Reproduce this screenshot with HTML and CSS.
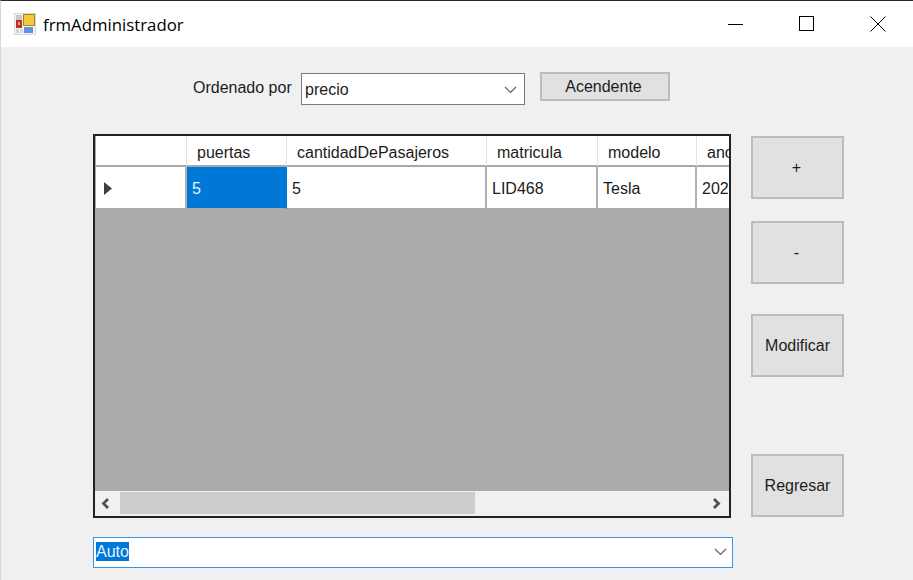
FILE: index.html
```html
<!DOCTYPE html>
<html lang="es">
<head>
  <meta charset="UTF-8" />
  <title>frmAdministrador</title>
  <link rel="stylesheet" href="styles.css">
</head>
<body>
  <div class="window">
    <!-- Title bar -->
    <div class="titlebar">
      <svg class="app-icon" width="22" height="22" viewBox="0 0 22 22">
        <rect width="22" height="22" fill="#d9d9d9"/>
        <rect x="1" y="1" width="20" height="20" fill="#f4f4f4"/>
        <rect x="2" y="2" width="6" height="5" fill="#c8c8c8"/>
        <rect x="2" y="7" width="6" height="8" fill="#b8322a"/>
        <rect x="4" y="9" width="2" height="3" fill="#e9a09a"/>
        <rect x="2" y="16" width="3" height="4" fill="#d0d0d0"/>
        <rect x="6" y="16" width="3" height="4" fill="#d8d8d8"/>
        <rect x="9" y="1" width="12" height="12" fill="#a8821c"/>
        <rect x="10" y="2" width="10" height="10" fill="#f6c83c"/>
        <rect x="10" y="14" width="9" height="6" fill="#5f94dc"/>
      </svg>
      <span class="title">frmAdministrador</span>
      <div class="win-buttons">
        <svg width="16" height="16" viewBox="0 0 16 16"><path d="M0 8.5h15" stroke="#000" fill="none"/></svg>
        <svg width="16" height="16" viewBox="0 0 16 16"><rect x="0.5" y="0.5" width="14" height="14" stroke="#000" fill="none"/></svg>
        <svg width="16" height="16" viewBox="0 0 16 16"><path d="M0.5 0.5l15 15M15.5 0.5l-15 15" stroke="#000" fill="none"/></svg>
      </div>
    </div>

    <div class="form">
      <div class="sort-row">
        <span class="sort-label">Ordenado por</span>
        <div class="combo combo-sort">
          <span class="combo-text">precio</span>
          <svg class="chevron" width="13" height="8" viewBox="0 0 13 8"><path d="M1 1l5.5 5.5L12 1" stroke="#606060" stroke-width="1.2" fill="none"/></svg>
        </div>
        <div class="btn btn-order">Acendente</div>
      </div>

      <div class="content">
        <div class="left-col">
          <div class="grid-view">
            <div class="grid-inner">
              <div class="rows">
                <div class="cell head first"></div>
                <div class="cell head">puertas</div>
                <div class="cell head">cantidadDePasajeros</div>
                <div class="cell head">matricula</div>
                <div class="cell head">modelo</div>
                <div class="cell head last">ano</div>

                <div class="cell data first">
                  <svg width="8" height="13" viewBox="0 0 8 13"><path d="M0 0l8 6.5L0 13z" fill="#404040"/></svg>
                </div>
                <div class="cell data selected">5</div>
                <div class="cell data">5</div>
                <div class="cell data">LID468</div>
                <div class="cell data">Tesla</div>
                <div class="cell data last">2020</div>
              </div>
            </div>
            <div class="scrollbar">
              <svg class="arrow arrow-left" width="9" height="11" viewBox="0 0 9 11"><path d="M7 1L2.5 5.5 7 10" stroke="#505050" stroke-width="2.8" fill="none"/></svg>
              <div class="track"><div class="thumb"></div></div>
              <svg class="arrow arrow-right" width="9" height="11" viewBox="0 0 9 11"><path d="M2 1l4.5 4.5L2 10" stroke="#505050" stroke-width="2.8" fill="none"/></svg>
            </div>
          </div>

          <div class="combo combo-auto">
            <span class="combo-text"><span class="highlight">Auto</span></span>
            <svg class="chevron" width="13" height="8" viewBox="0 0 13 8"><path d="M1 1l5.5 5.5L12 1" stroke="#606060" stroke-width="1.2" fill="none"/></svg>
          </div>
        </div>

        <div class="side-buttons">
          <div class="btn btn-side btn-plus">+</div>
          <div class="btn btn-side btn-minus">-</div>
          <div class="btn btn-side btn-mod">Modificar</div>
          <div class="btn btn-side btn-back">Regresar</div>
        </div>
      </div>
    </div>
  </div>
</body>
</html>
```

FILE: styles.css
```css
* {
  box-sizing: border-box;
}

html, body {
  margin: 0;
  padding: 0;
  overflow: hidden;
}

body {
  width: 913px;
  height: 580px;
  font-family: "Liberation Sans", Arial, sans-serif;
  font-size: 16px;
  color: #1c1c1c;
  background-color: #f0f0f0;
}

.window {
  height: 580px;
  border-top: 1px solid #2a2a2a;
  border-left: 1px solid #d8d8d8;
}

.titlebar {
  display: flex;
  align-items: center;
  height: 46px;
  padding-left: 13px;
  background-color: #fff;
}

.app-icon {
  margin-right: 7px;
}

.title {
  font-family: "Open Sans", "Noto Sans", sans-serif;
  font-size: 16.8px;
  color: #000;
  flex-grow: 1;
}

.win-buttons {
  display: flex;
  gap: 55px;
  padding-right: 27px;
}

.sort-row {
  display: flex;
  align-items: flex-start;
  padding: 25px 0 0 192px;
  height: 87px;
}

.sort-label {
  margin-top: 7px;
  width: 108px;
}

.combo {
  display: flex;
  align-items: center;
  justify-content: space-between;
  background-color: #fff;
}

.combo-sort {
  width: 224px;
  height: 32px;
  margin-top: 1px;
  padding: 2px 7px 0 3px;
  border: 1.5px solid #7a7a7a;
}

.combo-auto {
  width: 640px;
  height: 31px;
  margin-top: 19px;
  padding: 0 5px 2px 2px;
  border: 1.5px solid #3a96e2;
}

.highlight {
  display: inline-block;
  height: 19px;
  line-height: 19px;
  background-color: #0078d7;
  color: #e8f2fb;
}

.btn {
  display: flex;
  align-items: center;
  justify-content: center;
  background-color: #e1e1e1;
  border: 2px solid #bcbcbc;
}

.btn-order {
  width: 130px;
  height: 29px;
  margin-left: 15px;
  padding-right: 3px;
  padding-top: 1px;
}

.content {
  display: flex;
  padding-left: 92px;
}

.grid-view {
  width: 638px;
  height: 384px;
  display: flex;
  flex-direction: column;
  border: 2px solid #222;
  background-color: #ababab;
}

.grid-inner {
  flex-grow: 1;
  overflow: hidden;
}

.rows {
  display: grid;
  grid-template-columns: 92px 100px 200px 111px 99px 32px;
  grid-template-rows: 31px 42px;
}

.cell {
  display: flex;
  align-items: center;
  padding-left: 5px;
  overflow: hidden;
  white-space: nowrap;
  background-color: #fff;
  border-right: 1px solid #a0a0a0;
  border-bottom: 1px solid #a0a0a0;
}

.cell.head {
  padding-left: 10px;
  padding-top: 4px;
  border-right-color: #e2e2e2;
  border-bottom-width: 2px;
  border-bottom-color: #a8a8a8;
}

.cell.data {
  padding-top: 2px;
  border-right-width: 2px;
  border-right-color: #b0b0b0;
  border-bottom-color: #a8a8a8;
}

.cell.first {
  padding-left: 8px;
  margin-left: 1px;
}

.cell.last {
  border-right: none;
}

.cell.selected {
  background-color: #0078d7;
  color: #e8f2fb;
  border-right-color: #0078d7;
}

.scrollbar {
  display: flex;
  align-items: center;
  height: 25px;
  background-color: #f0f0f0;
  padding: 1px 0 2px;
}

.arrow {
  flex-shrink: 0;
}

.arrow-left {
  margin: 0 10px 0 6px;
}

.arrow-right {
  margin: 0 8px 0 6px;
}

.track {
  flex-grow: 1;
  height: 100%;
}

.thumb {
  width: 355px;
  height: 100%;
  background-color: #cdcdcd;
}

.side-buttons {
  display: flex;
  flex-direction: column;
  width: 93px;
  margin-left: 18px;
  padding-top: 2px;
}

.btn-side {
  height: 63px;
}

.btn-plus,
.btn-minus {
  padding-right: 2px;
}

.btn-minus {
  margin-top: 22px;
}

.btn-mod {
  margin-top: 30px;
}

.btn-back {
  margin-top: 77px;
}
```
